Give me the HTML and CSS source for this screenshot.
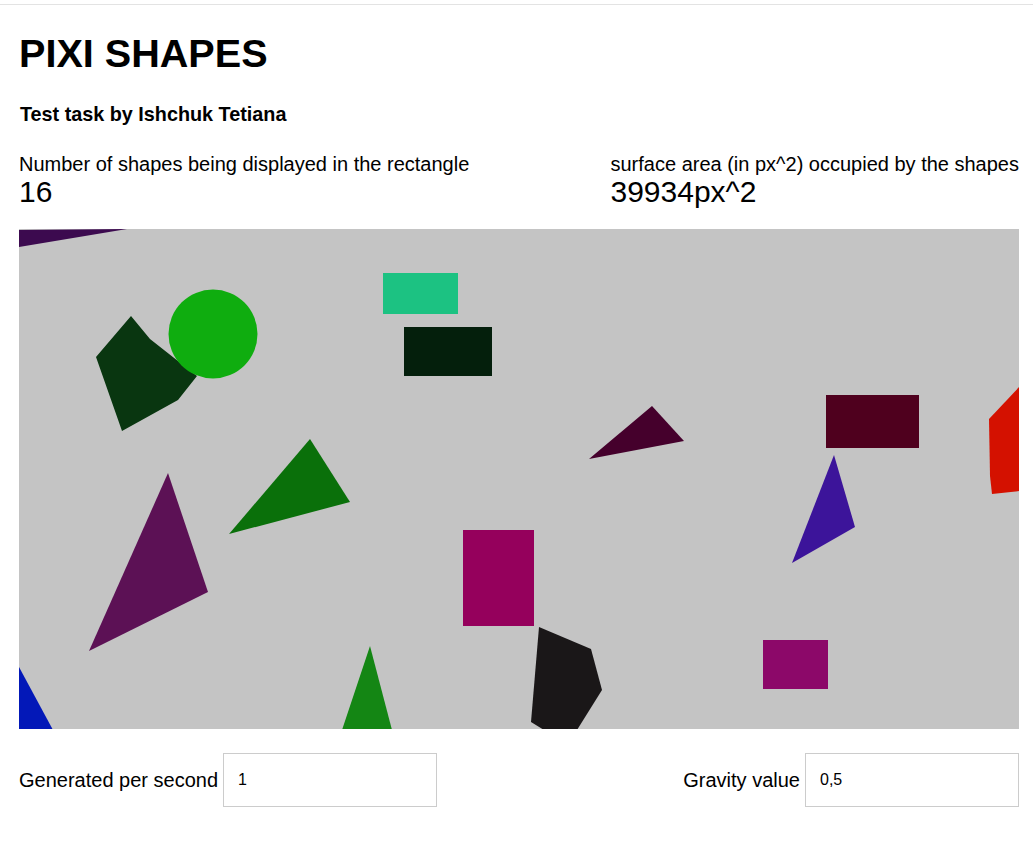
FILE: index.html
```html
<!DOCTYPE html>
<html lang="en">
<head>
<meta charset="utf-8">
<title>PIXI SHAPES</title>
<link rel="stylesheet" href="styles.css">
</head>
<body>
<div class="topline"></div>
<main class="page">
  <h1 class="title">PIXI SHAPES</h1>
  <h4 class="subtitle">Test task by Ishchuk Tetiana</h4>
  <section class="stats">
    <div class="stat">
      <div class="stat-label">Number of shapes being displayed in the rectangle</div>
      <div class="stat-value">16</div>
    </div>
    <div class="stat">
      <div class="stat-label">surface area (in px^2) occupied by the shapes</div>
      <div class="stat-value">39934px^2</div>
    </div>
  </section>
  <div class="stage">
    <svg class="stage-svg" width="1000" height="500" viewBox="0 0 1000 500">
      <polygon points="0,1 108,0 0,18" fill="#3c0a4f"/>
      <polygon points="112,87 131,110 178,147 159,171 103,202 77,128" fill="#093610"/>
      <circle cx="194" cy="105" r="44.5" fill="#0fad0f"/>
      <rect x="364" y="44" width="75" height="41" fill="#1cc282"/>
      <rect x="385" y="98" width="88" height="49" fill="#041f0c"/>
      <polygon points="633,177 665,212 570,230" fill="#45002c"/>
      <rect x="807" y="166" width="93" height="53" fill="#4f001e"/>
      <polygon points="1001,157 970,190 971,247 973,265 1001,262" fill="#d41100"/>
      <polygon points="815,226 836,298 773,334" fill="#3c149a"/>
      <polygon points="149,244 189,363 70,422" fill="#5c1155"/>
      <polygon points="291,210 331,273 210,305" fill="#0a700a"/>
      <polygon points="0,438 34,501 0,501" fill="#0318b8"/>
      <polygon points="351,417 323,501 373,501" fill="#148614"/>
      <rect x="444" y="301" width="71" height="96" fill="#95005c"/>
      <polygon points="520,398 572,420 583,461 558,501 525,501 512,493" fill="#1a1718"/>
      <rect x="744" y="411" width="65" height="49" fill="#8c0869"/>
    </svg>
  </div>
  <section class="controls">
    <label class="control">
      <span class="control-label">Generated per second</span>
      <input class="control-input" type="text" value="1">
    </label>
    <label class="control">
      <span class="control-label">Gravity value</span>
      <input class="control-input" type="text" value="0,5">
    </label>
  </section>
</main>
</body>
</html>
```

FILE: styles.css
```css
html, body {
  margin: 0;
  padding: 0;
  background: #ffffff;
}

body {
  font-family: "Liberation Sans", Arial, sans-serif;
  color: #000000;
}

.topline {
  height: 4px;
  border-bottom: 1px solid #e3e3e3;
}

.page {
  width: 1000px;
  margin: 0 0 0 19px;
}

.title {
  margin: 25px 0 0 0;
  font-size: 39.6px;
  line-height: 46px;
  font-weight: bold;
}

.subtitle {
  margin: 27px 0 0 1px;
  font-size: 19.8px;
  line-height: 23px;
  font-weight: bold;
}

.stats {
  display: flex;
  justify-content: space-between;
  margin-top: 27px;
}

.stat-label {
  font-size: 20px;
  line-height: 23px;
}

.stat-value {
  font-size: 30px;
  line-height: 32px;
}

.stage {
  margin-top: 21px;
  width: 1000px;
  height: 500px;
  background: #c4c4c4;
  overflow: hidden;
}

.stage-svg {
  display: block;
}

.controls {
  display: flex;
  justify-content: space-between;
  margin-top: 24px;
}

.control {
  display: flex;
  align-items: center;
  gap: 5px;
}

.control-label {
  font-size: 20px;
  line-height: 23px;
}

.control-input {
  box-sizing: border-box;
  width: 214px;
  height: 54px;
  border: 1px solid #cccccc;
  padding: 0 14px;
  font-family: "Liberation Sans", Arial, sans-serif;
  font-size: 16px;
  color: #000000;
  background: #ffffff;
  outline: none;
}
```
